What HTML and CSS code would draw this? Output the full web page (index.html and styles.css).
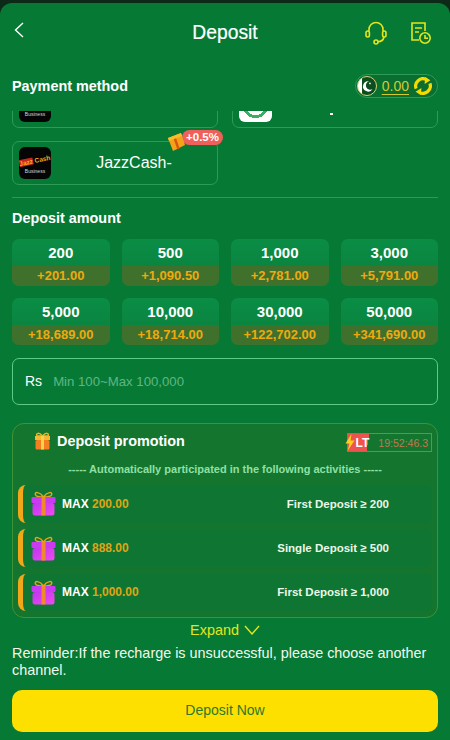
FILE: index.html
```html
<!DOCTYPE html>
<html lang="en">
<head>
    <meta charset="UTF-8">
    <meta name="viewport" content="width=device-width, initial-scale=1.0">
    <title>Deposit</title>
    <link rel="stylesheet" href="styles.css">
</head>
<body>
    <div class="sheet">
        <header class="top-bar">
            <svg class="back" width="12" height="18" viewBox="0 0 12 18"><path d="M9 2 L1.5 9 L9 16" fill="none" stroke="#fff" stroke-width="1.4"/></svg>
            <h1>Deposit</h1>
            <div class="top-icons">
                <svg width="22" height="24" viewBox="0 0 22 24" fill="none" stroke="#e4e51c" stroke-width="1.6">
                    <path d="M4 10 V8.5 a7 7 0 0 1 14 0 V10"/>
                    <rect x="1" y="10" width="3.4" height="6" rx="1.7"/>
                    <rect x="17.6" y="10" width="3.4" height="6" rx="1.7"/>
                    <path d="M19 16 q-1 4.6 -6 4.8"/>
                    <circle cx="11" cy="21" r="2"/>
                </svg>
                <svg width="22" height="24" viewBox="0 0 22 24" fill="none" stroke="#e4e51c" stroke-width="1.6">
                    <path d="M9 19 H2 V2 H15 V10"/>
                    <path d="M5 7 H12 M5 11 H9"/>
                    <circle cx="15" cy="17" r="5.2"/>
                    <path d="M15 14 V17.3 H18"/>
                </svg>
            </div>
        </header>

        <section class="method-head">
            <h2>Payment method</h2>
            <div class="balance">
                <span class="flag"><svg width="21" height="21" viewBox="0 0 21 21"><path d="M13 5 a6 6 0 1 0 4 9 a5 5 0 1 1 -4 -9z" fill="#fff"/><circle cx="14" cy="7.5" r="1" fill="#fff"/></svg></span>
                <span class="balance-num">0.00</span>
                <svg width="18" height="18" viewBox="0 0 17 17" fill="none" stroke="#f5dc00" stroke-width="3">
                    <path d="M2 11 A7 7 0 0 1 12 2.5"/>
                    <path d="M15 6 A7 7 0 0 1 5 14.5"/>
                    <path d="M10.5 0 L15.5 3 L10 6.5 Z M6.5 17 L1.5 14 L7 10.5 Z" fill="#f5dc00" stroke="none"/>
                </svg>
            </div>
        </section>

        <div class="method-list">
            <div class="method-card">
                <span class="logo"><span class="logo-biz">Business</span></span>
            </div>
            <div class="method-card">
                <span class="logo-green"></span>
                <span class="speck"></span>
            </div>
            <div class="method-card">
                <span class="logo">
                    <span class="logo-jazz"><i>Jazz</i> Cash</span>
                    <span class="logo-biz">Business</span>
                </span>
                <span class="method-name">JazzCash-</span>
                <span class="bonus">
                    <svg width="19" height="21" viewBox="0 0 19 21"><path d="M1 7 L14 2 L18 14 L6 20 Z" fill="#f5a11a"/><path d="M7 5 L11.5 18" stroke="#d8560f" stroke-width="2.4"/><path d="M1 7 L14 2 L15 5 L2 10 Z" fill="#f9bd2b"/></svg>
                    <span class="bonus-num">+0.5%</span>
                </span>
            </div>
        </div>

        <hr class="rule">

        <h2 class="amount-title">Deposit amount</h2>
        <div class="amounts">
            <div class="amount"><b>200</b><span>+201.00</span></div>
            <div class="amount"><b>500</b><span>+1,090.50</span></div>
            <div class="amount"><b>1,000</b><span>+2,781.00</span></div>
            <div class="amount"><b>3,000</b><span>+5,791.00</span></div>
            <div class="amount"><b>5,000</b><span>+18,689.00</span></div>
            <div class="amount"><b>10,000</b><span>+18,714.00</span></div>
            <div class="amount"><b>30,000</b><span>+122,702.00</span></div>
            <div class="amount"><b>50,000</b><span>+341,690.00</span></div>
        </div>

        <div class="amount-input">
            <span class="rs">Rs</span>
            <span class="placeholder">Min 100~Max 100,000</span>
        </div>

        <section class="promo">
            <div class="promo-head">
                <svg width="17" height="18" viewBox="0 0 17 18">
                    <path d="M8.5 4 C5 0 1.5 1 3 4 Z M8.5 4 C12 0 15.5 1 14 4 Z" fill="none" stroke="#f5b21e" stroke-width="1.5"/>
                    <rect x="1" y="4" width="15" height="4" fill="#f7b733"/>
                    <rect x="1.5" y="8" width="14" height="9.5" rx="1.5" fill="#f47f1f"/>
                    <rect x="7" y="4" width="3" height="13.5" fill="#f9d14a"/>
                </svg>
                <h3>Deposit promotion</h3>
                <div class="timer">
                    <svg class="bolt" width="10" height="17" viewBox="0 0 10 17"><path d="M6.5 0 L0.5 9.5 H4.5 L2.5 17 L9.5 6.5 H5.5 Z" fill="#f8d11c"/></svg>
                    <span class="timer-tag">LT</span>
                    <span class="timer-num">19:52:46.3</span>
                </div>
            </div>
            <p class="promo-note">----- Automatically participated in the following activities -----</p>

            <div class="promo-row">
                <svg class="gift" width="25" height="25" viewBox="0 0 25 25"><use href="#gift"/></svg>
                <span class="promo-max">MAX <em>200.00</em></span>
                <span class="promo-rule">First Deposit ≥ 200</span>
            </div>
            <div class="promo-row">
                <svg class="gift" width="25" height="25" viewBox="0 0 25 25"><use href="#gift"/></svg>
                <span class="promo-max">MAX <em>888.00</em></span>
                <span class="promo-rule">Single Deposit ≥ 500</span>
            </div>
            <div class="promo-row">
                <svg class="gift" width="25" height="25" viewBox="0 0 25 25"><use href="#gift"/></svg>
                <span class="promo-max">MAX <em>1,000.00</em></span>
                <span class="promo-rule">First Deposit ≥ 1,000</span>
            </div>
        </section>

        <div class="expand">
            Expand
            <svg width="16" height="10" viewBox="0 0 16 10"><path d="M1 1 L8 9 L15 1" fill="none" stroke="#e4e51c" stroke-width="1.4"/></svg>
        </div>

        <p class="reminder">Reminder:If the recharge is unsuccessful, please choose another channel.</p>

        <button class="deposit-btn">Deposit Now</button>
    </div>

    <svg class="defs" width="0" height="0">
        <defs>
            <linearGradient id="gift-body" x1="0" y1="0" x2="1" y2="1">
                <stop offset="0" stop-color="#bd35ef"/>
                <stop offset="1" stop-color="#f04bee"/>
            </linearGradient>
            <g id="gift">
                <path d="M12.5 6 C9 1 3 0 4.5 4 C5 5.5 8 6 12.5 6 C17 6 20 5.5 20.5 4 C22 0 16 1 12.5 6 Z" fill="none" stroke="#e3a51d" stroke-width="1.5"/>
                <rect x="0.5" y="6" width="24" height="6" rx="1" fill="#c93bf0"/>
                <rect x="1.5" y="12" width="22" height="12.5" rx="2.5" fill="url(#gift-body)"/>
                <rect x="10.5" y="6" width="4" height="18.5" fill="#ef8a2a"/>
            </g>
        </defs>
    </svg>
</body>
</html>
```

FILE: styles.css
```css
body {
    margin: 0;
    background: #0d2a18;
    font-family: "Liberation Sans", Arial, sans-serif;
    color: #fff;
    overflow: hidden;
}

.sheet {
    margin-top: 3px;
    height: 737px;
    box-sizing: border-box;
    padding: 0 12px;
    background: #067a35;
    border-radius: 12px 12px 0 0;
}

.defs {
    position: absolute;
}

/* header */
.top-bar {
    position: relative;
    display: flex;
    justify-content: center;
    align-items: center;
    height: 60px;
}

.top-bar h1 {
    margin: 0;
    font-size: 19.3px;
    font-weight: normal;
    -webkit-text-stroke: 0.2px #fff;
}

.back {
    position: absolute;
    left: 2px;
    top: 18px;
}

.top-icons {
    position: absolute;
    right: 6px;
    top: 18px;
    display: flex;
    gap: 23px;
}

/* payment method */
.method-head {
    display: flex;
    justify-content: space-between;
    align-items: center;
    height: 48px;
    box-sizing: border-box;
    padding-bottom: 2px;
}

h2 {
    margin: 0;
    font-size: 14.4px;
    font-weight: bold;
}

.balance {
    display: flex;
    align-items: center;
    gap: 5px;
    height: 22px;
    padding: 0 5px 0 1px;
    border: 1px solid #2f9a58;
    border-radius: 13px;
    background: #0a6e31;
}

.flag {
    display: block;
    width: 20px;
    height: 20px;
    border-radius: 50%;
    border: 1px solid #d8d27a;
    box-sizing: border-box;
    background: linear-gradient(to right, #fff 22%, #0b4d1e 22%);
    overflow: hidden;
}

.flag svg {
    display: block;
    width: 18px;
    height: 18px;
}

.balance-num {
    font-size: 14px;
    color: #d6c92c;
    text-decoration: underline;
    text-underline-offset: 3px;
}

.method-list {
    display: grid;
    grid-template-columns: 1fr 1fr;
    align-content: end;
    gap: 13px 14px;
    height: 74px;
    overflow: hidden;
}

.method-card {
    position: relative;
    display: flex;
    align-items: center;
    height: 44px;
    box-sizing: border-box;
    border: 1px solid #2f9a58;
    border-radius: 7px;
    padding-left: 6px;
}

.logo {
    display: flex;
    flex-direction: column;
    align-items: center;
    justify-content: flex-end;
    gap: 4px;
    width: 32px;
    height: 32px;
    box-sizing: border-box;
    padding-bottom: 5px;
    border-radius: 6px;
    background: #050505;
    flex: none;
}

.logo-jazz {
    font-size: 6.5px;
    font-weight: bold;
    color: #f2b01e;
    white-space: nowrap;
    transform: rotate(-12deg);
}

.logo-jazz i {
    font-style: normal;
    background: #c9271d;
}

.logo-biz {
    font-size: 5px;
    line-height: 6px;
    color: #d8d8d8;
}

.logo-green {
    width: 33px;
    height: 32px;
    border-radius: 6px;
    background: radial-gradient(circle at 50% 15px, #fff 10px, #3cae64 10px, #3cae64 13px, #fff 13px);
    flex: none;
}

.speck {
    position: absolute;
    left: 97px;
    top: 28px;
    width: 3px;
    height: 2px;
    background: #fff;
}

.method-name {
    flex: 1;
    text-align: center;
    font-size: 16px;
}

.bonus {
    position: absolute;
    right: -6px;
    top: -15px;
    display: flex;
    align-items: center;
}

.bonus svg {
    margin-right: -4px;
    position: relative;
    top: 4px;
}

.bonus-num {
    height: 15px;
    padding: 0 4px;
    border-radius: 8px;
    background: #f0605a;
    font-size: 11.5px;
    font-weight: bold;
    line-height: 15px;
}

.rule {
    margin: 12px 0 0;
    border: 0;
    border-top: 1px solid #2f9a58;
}

/* amounts */
.amount-title {
    margin-top: 12px;
    line-height: 17px;
}

.amounts {
    display: grid;
    grid-template-columns: repeat(4, 1fr);
    gap: 12px;
    margin-top: 12px;
}

.amount {
    display: flex;
    flex-direction: column;
    height: 47px;
    border-radius: 7px;
    overflow: hidden;
    background: linear-gradient(#0a8d46, #0b7f3c);
    text-align: center;
}

.amount b {
    flex: 1;
    font-size: 15px;
    line-height: 27px;
}

.amount span {
    height: 20px;
    background: #3f712c;
    color: #efa90f;
    font-size: 13px;
    font-weight: bold;
    line-height: 19px;
}

.amount-input {
    display: flex;
    align-items: center;
    gap: 11px;
    height: 47px;
    box-sizing: border-box;
    margin-top: 13px;
    padding-left: 12px;
    padding-bottom: 1px;
    border: 1px solid #5fc98a;
    border-radius: 7px;
}

.rs {
    font-size: 14px;
}

.placeholder {
    font-size: 13.2px;
    color: #60b583;
}

/* promotion */
.promo {
    height: 195px;
    box-sizing: border-box;
    margin-top: 18px;
    padding: 0 5px;
    border: 1px solid #3f9238;
    border-radius: 12px;
    background: #14752f;
}

.promo-head {
    position: relative;
    display: flex;
    align-items: center;
    gap: 6px;
    height: 34px;
    padding-left: 16px;
}

.promo-head h3 {
    margin: 0;
    font-size: 14.4px;
}

.timer {
    position: absolute;
    right: 0;
    top: 9px;
    display: flex;
    align-items: center;
    height: 19px;
    box-sizing: border-box;
    border: 1px solid #b5694a;
    background: linear-gradient(100deg, #ef5350 25%, transparent 25%);
}

.bolt {
    margin-left: -3px;
}

.timer-tag {
    width: 14px;
    font-size: 12px;
    font-weight: bold;
    text-align: center;
}

.timer-num {
    padding: 0 3px 0 9px;
    font-size: 10.5px;
    color: #c4764f;
}

.promo-note {
    margin: 4px 0 9px;
    font-size: 11px;
    font-weight: bold;
    line-height: 14px;
    text-align: center;
    color: #8fe0a4;
}

.promo-row {
    display: flex;
    align-items: center;
    height: 37.5px;
    margin-bottom: 6.8px;
    padding-left: 8px;
    border-left: 5px solid #f0a818;
    border-radius: 8px;
    background: #0e7632;
}

.promo-max {
    margin-left: 6px;
    font-size: 12px;
    font-weight: bold;
}

.promo-max em {
    font-style: normal;
    color: #dfa416;
}

.promo-rule {
    margin-left: auto;
    margin-right: 43px;
    font-size: 11.5px;
    font-weight: bold;
    color: #ecf7e8;
}

/* footer */
.expand {
    display: flex;
    justify-content: center;
    align-items: center;
    gap: 5px;
    height: 24px;
    font-size: 14.4px;
    color: #e4e51c;
}

.reminder {
    margin: 3px 0 0;
    font-size: 14.4px;
    line-height: 17px;
    color: #f2f8ee;
}

.deposit-btn {
    display: block;
    width: 100%;
    height: 42px;
    margin-top: 11px;
    padding: 0 0 3px;
    border: 0;
    border-radius: 10px;
    background: #fde000;
    color: #2c7a2c;
    font-family: "Liberation Sans", Arial, sans-serif;
    font-size: 14px;
}
```
